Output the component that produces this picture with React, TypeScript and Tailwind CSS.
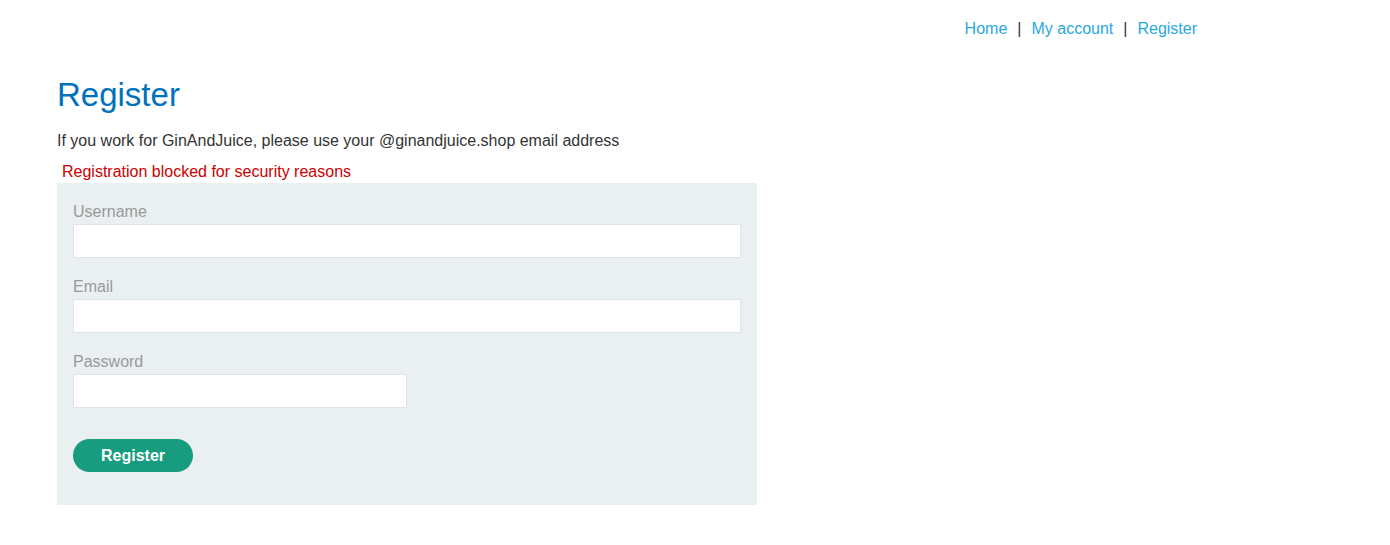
import React from 'react'

const font = { fontFamily: '"Liberation Sans", Arial, sans-serif' }

function Field({ label, type = 'text', half = false }: { label: string; type?: string; half?: boolean }) {
  return (
    <div className="flex flex-col">
      <label className="text-[16px] leading-[19px] text-[#999999] h-[22px]">{label}</label>
      <input
        type={type}
        className={`h-[34px] bg-white border border-[#e1e4e6] outline-none ${half ? 'w-[334px]' : 'w-full'}`}
      />
    </div>
  )
}

export default function App() {
  return (
    <div className="min-h-[545px] bg-white text-[#333333]" style={font}>
      {/* top nav */}
      <div className="flex justify-end pr-[193px] pt-[19px] text-[16px] leading-[19px]">
        <a className="text-[#29a8e0]">Home</a>
        <span className="px-[10px]">|</span>
        <a className="text-[#29a8e0]">My account</a>
        <span className="px-[10px]">|</span>
        <a className="text-[#29a8e0]">Register</a>
      </div>

      <div className="pl-[57px]">
        <h1 className="text-[33px] leading-[38px] text-[#0071bc] mt-[38px]">Register</h1>
        <p className="text-[16px] leading-[19px] mt-[17px]">
          If you work for GinAndJuice, please use your @ginandjuice.shop email address
        </p>
        <p className="text-[16px] leading-[19px] text-[#cc0000] mt-[12px] pl-[5px]">
          Registration blocked for security reasons
        </p>

        <form className="w-[700px] bg-[#eaeff2] px-[16px] pt-[19px] pb-[33px] mt-[2px]">
          <div className="flex flex-col gap-[19px]">
            <Field label="Username" />
            <Field label="Email" />
            <Field label="Password" type="password" half />
          </div>
          <button
            type="button"
            className="mt-[31px] w-[120px] h-[33px] rounded-full bg-[#179c7f] text-white font-bold text-[16px]"
          >
            Register
          </button>
        </form>
      </div>
    </div>
  )
}
